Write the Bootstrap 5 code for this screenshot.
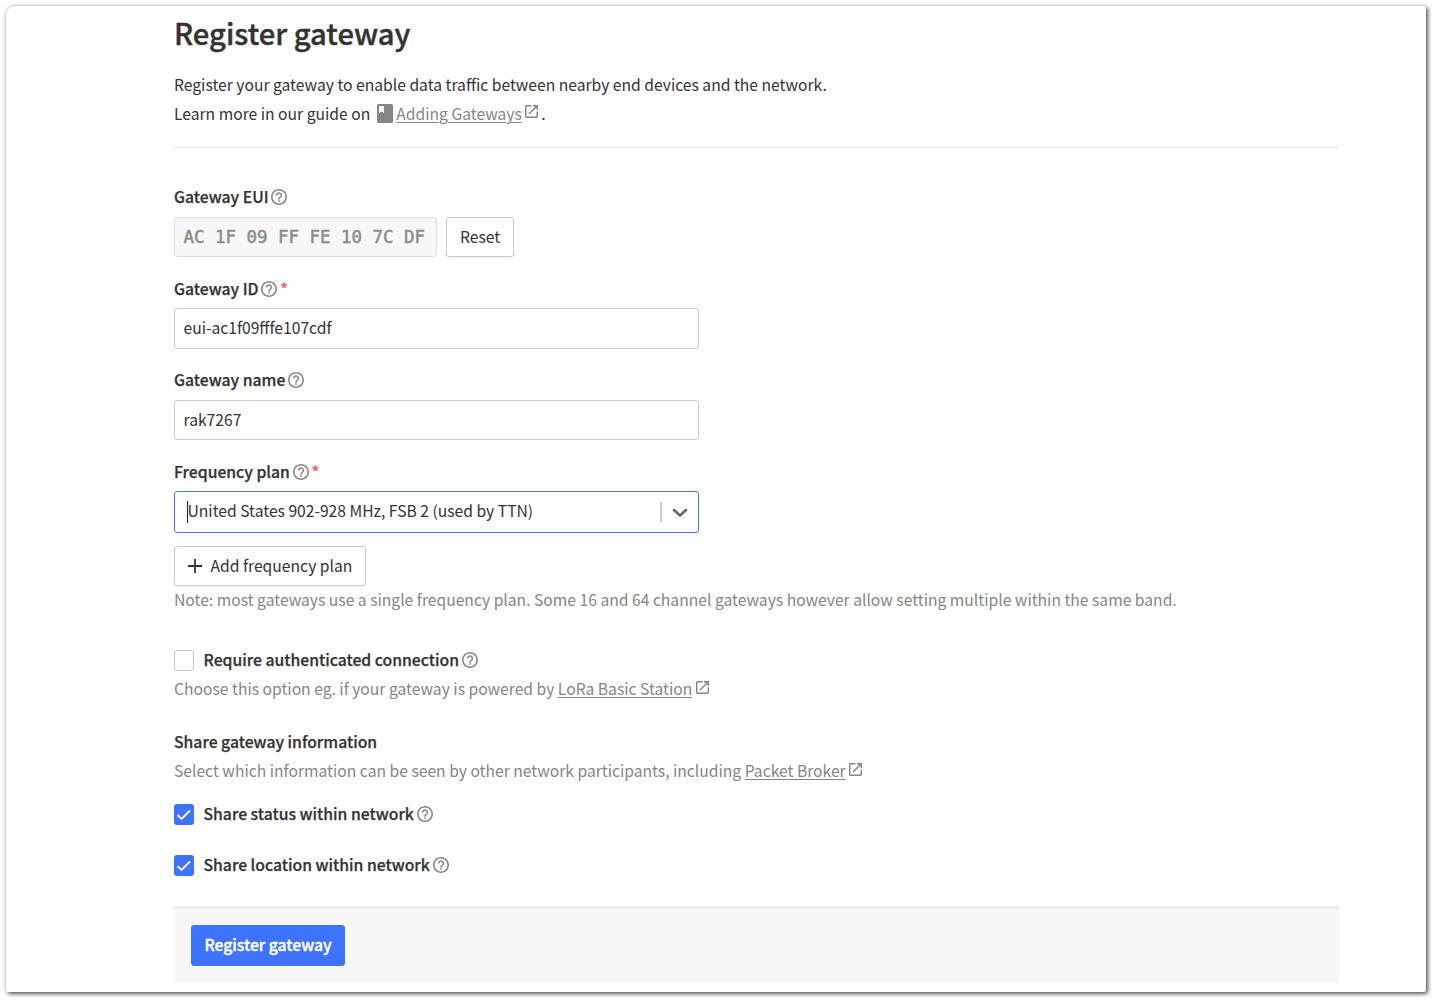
<!DOCTYPE html>
<html lang="en">
<head>
<meta charset="utf-8">
<meta name="viewport" content="width=device-width, initial-scale=1">
<title>Register gateway</title>
<link href="https://cdn.jsdelivr.net/npm/bootstrap@5.3.0/dist/css/bootstrap.min.css" rel="stylesheet">
<style>
body{margin:0;height:1001px;overflow:hidden;padding:6px 9px 9px 6px;background:#fff;color:#333;font-family:"Noto Sans CJK SC","Noto Sans",sans-serif;font-size:15.67px;line-height:29px}
.sheet{height:986px;padding:0 87px 0 168px;background:#fff;border-radius:9px 2px 2px 2px;box-shadow:2px 2px 4px rgba(0,0,0,.62),0 0 5px rgba(0,0,0,.22)}
h1{font-size:29.2px;line-height:40px;font-weight:500;margin:0;padding-top:6px;height:64px;-webkit-text-stroke:.4px #333}
.intro{height:71px}
.rule{border-top:1px solid #eaeaea;height:35px;margin-top:6px}
.tag{font-size:15.74px;font-weight:500;height:29px;display:flex;align-items:center;white-space:nowrap;-webkit-text-stroke:.25px #333}
.tag svg{margin-left:2.700px}
.tag .req{color:#ff5a52;margin-left:3px;-webkit-text-stroke:.25px #ff5a52}
.form-control,.btn{font-size:inherit;line-height:29px;border-radius:3px;height:40px;padding:0 8.5px 2px;color:#333;border-color:#ccc}
.form-control{width:525px}
.btn{padding:0 13px;line-height:36px}
.btn-line{background:#fff;box-shadow:0 1px 1px rgba(0,0,0,.07)}
.form-control.eui{width:263px;padding:0 8.500px;background:#f7f7f7;border-color:#dedede;color:#8c8c8c;font:17.44px/29px "DejaVu Sans Mono",monospace;white-space:pre;-webkit-text-stroke:.5px #8c8c8c}
.plan{width:525px;height:42px;border:1px solid #3d73ff;border-radius:3px;padding-left:12px}
.plan .value{padding-bottom:3px;margin-left:-.5px}
.caret{width:1px;height:22px;background:#222}
.split{width:2px;height:20px;background:#ccc}
.soft,.soft a,.intro a{color:#868686}
.soft{white-space:nowrap;height:29px}
.soft a,.intro a{text-decoration:underline;text-decoration-thickness:1px;text-underline-offset:2px}
.form-check-input{width:20px;height:21px;margin:1px 9.500px 0 0;border:1px solid #c9c9c9;border-radius:3px}
.tick{width:20px;height:21px;background:#3d73ff;border-radius:3px;margin:1px 9.500px 0 0;display:flex}
.tag .tick svg{margin:0}
.actions{border-top:1px solid #ddd;background:#f7f7f7;height:76px;padding:17px}
.btn-go{background:#3d73ff;border-color:#3d73ff;color:#fff;width:154px;height:41px;padding:0 0 2px;font-size:15.7px;font-weight:500;-webkit-text-stroke:.4px #fff}
svg{flex:none}
</style>
<script src="https://cdn.jsdelivr.net/npm/bootstrap@5.3.0/dist/js/bootstrap.bundle.min.js"></script>
</head>
<body>
<svg class="d-none">
<symbol id="help" viewBox="2 2 20 20"><path fill="#868686" d="M11 18h2v-2h-2v2zm1-16C6.48 2 2 6.48 2 12s4.480 10 10 10 10-4.480 10-10S17.520 2 12 2zm0 18c-4.410 0-8-3.590-8-8s3.590-8 8-8 8 3.590 8 8-3.590 8-8 8zm0-14c-2.210 0-4 1.790-4 4h2c0-1.100.9-2 2-2s2 .9 2 2c0 2-3 1.750-3 5h2c0-2.250 3-2.500 3-5 0-2.210-1.790-4-4-4z"/></symbol>
<symbol id="out" viewBox="3 3 18 18"><path fill="#868686" d="M19 19H5V5h7V3H5a2 2 0 0 0-2 2v14a2 2 0 0 0 2 2h14c1.100 0 2-.9 2-2v-7h-2v7zM14 3v2h3.590l-9.830 9.830 1.410 1.410L19 6.410V10h2V3h-7z"/></symbol>
<symbol id="check" viewBox="0 0 20 21"><path d="M3.500 11l4 4L16 6.500" fill="none" stroke="#fff" stroke-width="1.900"/></symbol>
</svg>
<main class="sheet">
  <h1>Register gateway</h1>
  <div class="intro">
    <div>Register your gateway to enable data traffic between nearby end devices and the network.</div>
    <div class="d-flex align-items-center"><span>Learn more in our guide on</span><svg style="margin:0 3px 0 7px" width="16" height="19" viewBox="0 0 16 19"><path fill="#868686" fill-rule="evenodd" d="M1.500 0h13A1.500 1.500 0 0 1 16 1.500v16a1.500 1.500 0 0 1-1.500 1.500h-13A1.500 1.500 0 0 1 0 17.500v-16A1.500 1.500 0 0 1 1.500 0zM2 2v7l2.500-1.600L7 9V2z"/></svg><a href="#">Adding Gateways</a><svg class="mb-1" style="margin-left:3.500px" width="13" height="13"><use href="#out"/></svg><span style="margin-left:3px">.</span></div>
  </div>
  <div class="rule"></div>
  <div class="tag">Gateway EUI<svg width="16" height="16"><use href="#help"/></svg></div>
  <div class="d-flex" style="margin-top:6px;margin-bottom:17px"><div class="form-control eui d-flex align-items-center">AC 1F 09 FF FE 10 7C DF</div><button class="btn btn-line" style="margin-left:9px">Reset</button></div>
  <div class="tag">Gateway ID<svg width="16" height="16"><use href="#help"/></svg><span class="req">*</span></div>
  <div class="form-control d-flex align-items-center" style="height:41px;margin-top:5px;margin-bottom:16px">eui-ac1f09fffe107cdf</div>
  <div class="tag">Gateway name<svg width="16" height="16"><use href="#help"/></svg></div>
  <div class="form-control d-flex align-items-center" style="margin-top:6px;margin-bottom:17px">rak7267</div>
  <div class="tag">Frequency plan<svg width="16" height="16"><use href="#help"/></svg><span class="req">*</span></div>
  <div class="plan d-flex align-items-center" style="margin-top:5px;margin-bottom:13px"><span class="caret"></span><span class="value flex-grow-1">United States 902-928 MHz, FSB 2 (used by TTN)</span><span class="split"></span><svg style="margin:1px 10px 0 10px" width="16" height="10" viewBox="0 0 16 10"><path d="M2 2L8 7.500l6-5.500" fill="none" stroke="#666" stroke-width="2.600" stroke-linecap="round"/></svg></div>
  <button class="btn btn-line d-flex align-items-center"><svg style="margin:0 8.500px 1px 0" width="14" height="14"><path d="M7 0v14M0 7h14" stroke="#333" stroke-width="1.800"/></svg>Add frequency plan</button>
  <div class="soft" style="margin-top:-1px">Note: most gateways use a single frequency plan. Some 16 and 64 channel gateways however allow setting multiple within the same band.</div>
  <div class="tag" style="margin-top:31px"><span class="form-check-input"></span>Require authenticated connection<svg width="16" height="16"><use href="#help"/></svg></div>
  <div class="soft d-flex align-items-center"><span>Choose this option eg. if your gateway is powered by <a href="#">LoRa Basic Station</a></span><svg style="margin:0 0 2px 3.500px" width="13" height="13"><use href="#out"/></svg></div>
  <div class="tag" style="margin-top:24px">Share gateway information</div>
  <div class="soft d-flex align-items-center"><span>Select which information can be seen by other network participants, including <a href="#">Packet Broker</a></span><svg style="margin:0 0 2px 3.500px" width="13" height="13"><use href="#out"/></svg></div>
  <div class="tag" style="margin-top:14px"><span class="tick"><svg width="20" height="21"><use href="#check"/></svg></span>Share status within network<svg width="16" height="16"><use href="#help"/></svg></div>
  <div class="tag" style="margin-top:22px"><span class="tick"><svg width="20" height="21"><use href="#check"/></svg></span>Share location within network<svg width="16" height="16"><use href="#help"/></svg></div>
  <div class="actions" style="margin-top:28px"><button class="btn btn-go">Register gateway</button></div>
</main>
</body>
</html>
